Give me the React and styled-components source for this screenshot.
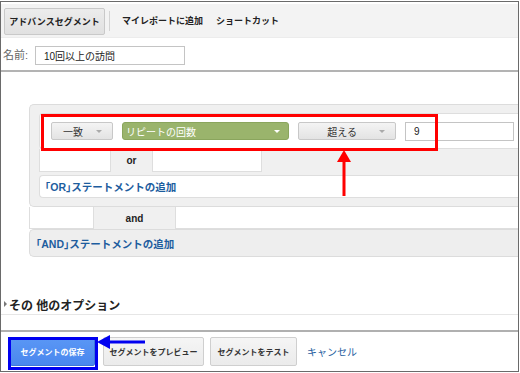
import React from "react";
import styled, { createGlobalStyle } from "styled-components";

const Global = createGlobalStyle`
  html, body { margin: 0; padding: 0; background: #fff; }
  body { font-family: "Liberation Sans", "Noto Sans CJK JP", sans-serif; }
  * { box-sizing: border-box; }
`;

const Frame = styled.div`
  position: relative;
  width: 519px;
  height: 371px;
  margin-top: 1px;
  border: 1px solid #6a6a6a;
  display: flex;
  flex-direction: column;
  overflow: hidden;
  background: #fff;
`;

const Toolbar = styled.div`
  height: 34px;
  margin-top: 2px;
  background: #f3f3f3;
  display: flex;
  align-items: center;
  padding-left: 3px;
  border-bottom: 1px solid #ececec;
`;

const ToolButton = styled.div`
  height: 27px;
  width: 101px;
  display: flex;
  align-items: center;
  justify-content: center;
  background: linear-gradient(#ececec, #e1e1e1);
  border: 1px solid #c9c9c9;
  border-radius: 2px;
  font-size: 9px;
  font-weight: bold;
  color: #222;
  margin-top: 1px;
`;

const Sep = styled.div`
  width: 1px;
  height: 20px;
  background: #d4d4d4;
  margin: 0 12px 0 4px;
`;

const ToolLink = styled.div`
  font-size: 9px;
  font-weight: bold;
  color: #222;
  margin-right: ${(p) => p.$mr || 0}px;
`;

const NameRow = styled.div`
  height: 34px;
  display: flex;
  align-items: center;
  padding-left: 2px;
  border-bottom: 2px solid #b3b3b3;
`;

const Label = styled.span`
  font-size: 11px;
  color: #666;
  width: 32px;
`;

const TextBox = styled.div`
  width: ${(p) => p.$w}px;
  height: ${(p) => p.$h}px;
  border: 1px solid #c4c4c4;
  background: #fff;
  font-size: 10px;
  color: #222;
  display: flex;
  align-items: center;
  padding-left: 8px;
  margin-top: ${(p) => p.$mt || 0}px;
`;

const Body = styled.div`
  padding: 32px 0 0 28px;
  display: flex;
  flex-direction: column;
`;

const Panel = styled.div`
  background: #f0f0f0;
  border: 1px solid #dcdcdc;
  border-right: none;
  border-radius: 5px 0 0 5px;
  padding: 8px 0 8px 9px;
  display: flex;
  flex-direction: column;
`;

const CondBox = styled.div`
  height: 36px;
  background: #fff;
  border: 1px solid #dedede;
  border-right: none;
  border-radius: 4px 0 0 4px;
  display: flex;
  align-items: center;
  padding-left: 11px;
  gap: 9px;
`;

const DropButton = styled.div`
  width: ${(p) => p.$w}px;
  height: 18px;
  background: linear-gradient(#f4f4f4, #e3e3e3);
  border: 1px solid #c8c8c8;
  border-radius: 2px;
  display: flex;
  align-items: center;
  justify-content: flex-end;
  padding-right: 10px;
  gap: ${(p) => p.$gap}px;
  font-size: 10px;
  color: #333;
`;

const GreenDrop = styled.div`
  width: 167px;
  height: 18px;
  background: #9ab46c;
  border: 1px solid #8aa55d;
  border-radius: 3px;
  display: flex;
  align-items: center;
  justify-content: space-between;
  padding: 0 8px 0 3px;
  font-size: 10px;
  color: #fff;
`;

const Caret = styled.span`
  width: 0;
  height: 0;
  border-left: 3px solid transparent;
  border-right: 3px solid transparent;
  border-top: 3px solid ${(p) => p.$c};
`;

const TabRow = styled.div`
  display: flex;
  height: ${(p) => p.$h}px;
  margin-bottom: ${(p) => p.$mb || 0}px;
`;

const BlankBox = styled.div`
  width: ${(p) => (p.$w ? `${p.$w}px` : "auto")};
  flex: ${(p) => (p.$w ? "none" : "1")};
  background: #fff;
  border: 1px solid #dedede;
  border-top: none;
  ${(p) => (p.$open ? "border-right: none;" : "")}
`;

const Tab = styled.div`
  width: ${(p) => p.$w}px;
  display: flex;
  align-items: center;
  justify-content: center;
  font-size: 10px;
  font-weight: bold;
  color: #222;
  background: #f0f0f0;
`;

const StmtBox = styled.div`
  height: 23px;
  background: #fff;
  border: 1px solid #dedede;
  border-right: none;
  border-radius: 4px 0 0 4px;
  display: flex;
  align-items: center;
  padding-left: 5px;
`;

const BlueLink = styled.span`
  font-size: ${(p) => p.$fs || 10.5}px;
  font-weight: ${(p) => p.$fw || "bold"};
  color: #1d5d9e;
`;

const AndPanel = styled.div`
  height: 28px;
  background: #eeeeee;
  border: 1px solid #dcdcdc;
  border-right: none;
  border-radius: 5px 0 0 5px;
  display: flex;
  align-items: center;
  padding-left: 6px;
`;

const Options = styled.div`
  margin-top: 37px;
  height: 21px;
  display: flex;
  align-items: center;
  padding-left: 3px;
  border-bottom: 1px solid #e6e6e6;
  font-size: 12px;
  font-weight: bold;
  color: #222;
`;

const Tri = styled.span`
  width: 0;
  height: 0;
  border-top: 3px solid transparent;
  border-bottom: 3px solid transparent;
  border-left: 3px solid #777;
  margin-right: 2px;
`;

const Footer = styled.div`
  margin-top: 15px;
  border-top: 2px solid #b0b0b0;
  padding: 5px 0 0 9px;
  display: flex;
  align-items: center;
  gap: 6px;
`;

const FootButton = styled.div`
  height: 29px;
  width: ${(p) => p.$w}px;
  display: flex;
  align-items: center;
  justify-content: center;
  font-size: 8px;
  font-weight: bold;
  border-radius: 2px;
  color: ${(p) => (p.$primary ? "#fff" : "#333")};
  background: ${(p) =>
    p.$primary ? "linear-gradient(#5a97f5, #4a87ee)" : "linear-gradient(#f5f5f5, #ebebeb)"};
  border: 1px solid ${(p) => (p.$primary ? "#3d78d8" : "#cfcfcf")};
  margin-right: ${(p) => p.$mr || 0}px;
`;

const Annot = styled.div`
  position: absolute;
  left: ${(p) => p.$x}px;
  top: ${(p) => p.$y}px;
  width: ${(p) => p.$w}px;
  height: ${(p) => p.$h}px;
  border: 3px solid ${(p) => p.$c};
  pointer-events: none;
`;

const ArrowSvg = styled.svg`
  position: absolute;
  left: ${(p) => p.$x}px;
  top: ${(p) => p.$y}px;
  overflow: visible;
`;

export default function App() {
  return (
    <>
      <Global />
      <Frame>
        <Toolbar>
          <ToolButton>アドバンスセグメント</ToolButton>
          <Sep />
          <ToolLink $mr={13}>マイレポートに追加</ToolLink>
          <ToolLink>ショートカット</ToolLink>
        </Toolbar>
        <NameRow>
          <Label>名前:</Label>
          <TextBox $w={150} $h={19} $mt={2}>10回以上の訪問</TextBox>
        </NameRow>
        <Body>
          <Panel>
            <CondBox>
              <DropButton $w={62} $gap={13}>
                一致 <Caret $c="#aaa" />
              </DropButton>
              <GreenDrop>
                リピートの回数 <Caret $c="#fff" />
              </GreenDrop>
              <DropButton $w={98} $gap={22}>
                超える <Caret $c="#aaa" />
              </DropButton>
              <TextBox $w={109} $h={19}>9</TextBox>
            </CondBox>
            <TabRow $h={23} $mb={3}>
              <BlankBox $w={72} />
              <Tab $w={41}>or</Tab>
              <BlankBox $w={110} />
            </TabRow>
            <StmtBox>
              <BlueLink>｢OR｣ステートメントの追加</BlueLink>
            </StmtBox>
          </Panel>
          <TabRow $h={22}>
            <BlankBox $w={65} />
            <Tab $w={81}>and</Tab>
            <BlankBox $open />
          </TabRow>
          <AndPanel>
            <BlueLink>｢AND｣ステートメントの追加</BlueLink>
          </AndPanel>
        </Body>
        <Options>
          <Tri />
          その 他のオプション
        </Options>
        <Footer>
          <FootButton $primary $w={85} $mr={2}>セグメントの保存</FootButton>
          <FootButton $w={101}>セグメントをプレビュー</FootButton>
          <FootButton $w={87} $mr={4}>セグメントをテスト</FootButton>
          <BlueLink $fs={10} $fw="normal">キャンセル</BlueLink>
        </Footer>

        <Annot $x={40} $y={112} $w={397} $h={37} $c="#ff0000" />
        <Annot $x={7} $y={335} $w={90} $h={33} $c="#0000f0" />
        <ArrowSvg $x={336} $y={148} width="14" height="48">
          <polygon points="7,0 0,12 14,12" fill="#ff0000" />
          <rect x="5.5" y="11" width="3" height="35" fill="#ff0000" />
        </ArrowSvg>
        <ArrowSvg $x={96} $y={333} width="50" height="14">
          <polygon points="0,7 13,0 13,14" fill="#0000f0" />
          <rect x="12" y="5.5" width="36" height="3" fill="#0000f0" />
        </ArrowSvg>
      </Frame>
    </>
  );
}
